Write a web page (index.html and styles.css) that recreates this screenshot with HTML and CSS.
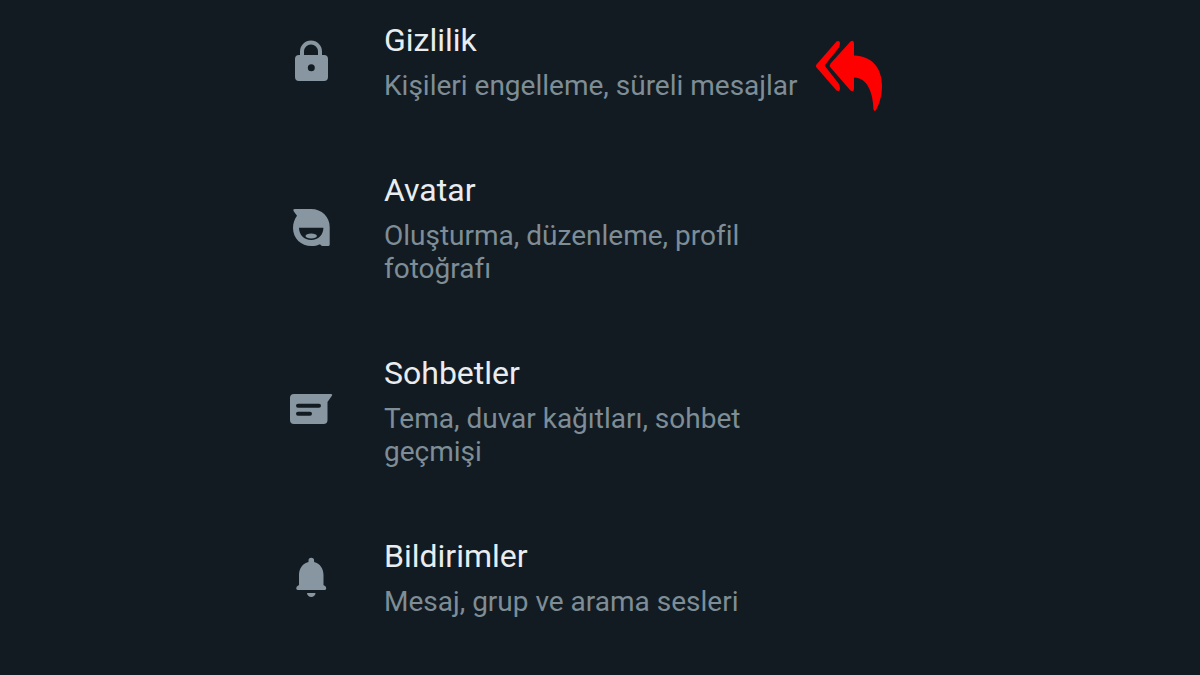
FILE: index.html
```
<!DOCTYPE html>
<html lang="tr">
<head>
<meta charset="UTF-8">
<meta name="viewport" content="width=device-width, initial-scale=1">
<title>Ayarlar</title>
<link rel="stylesheet" href="styles.css">
</head>
<body>
<nav class="settings">
    <a class="row" href="#gizlilik">
        <svg class="icon" viewBox="0 0 60 60" aria-hidden="true">
            <path d="M22 25v-4.500a9 9 0 0 1 18 0V25" fill="none" stroke="currentColor" stroke-width="4"/>
            <path fill-rule="evenodd" d="M19 24h25a4 4 0 0 1 4 4v18a4 4 0 0 1-4 4H19a4 4 0 0 1-4-4V28a4 4 0 0 1 4-4zm12.300 9.300a3.500 3.500 0 1 0 0 7a3.500 3.500 0 0 0 0-7z"/>
        </svg>
        <span class="text">
            <span class="title">Gizlilik</span>
            <span class="desc">Kişileri engelleme, süreli mesajlar</span>
        </span>
        <svg class="arrow" viewBox="0 0 90 90" aria-hidden="true">
            <path d="M30.500 11.500q3.500-1.500 3.500 2.500L33 17.500L18.500 35.500L33 54l1 4q0 4-3.500 2.500L10.500 37.500q-1.500-1.500 0-3z"/>
            <path d="M44.500 11.500q3.500-2 3.500 2V25.500C66 26 76 38 76 56c0 9-2.500 18-6 24q-1.500 2-2.500-.5C67 62 61 47.500 48 47.500V58q0 4.500-3.500 2.500L24.500 37.500q-1.500-2 0-4z"/>
        </svg>
    </a>
    <a class="row" href="#avatar">
        <svg class="icon" viewBox="0 0 60 60" aria-hidden="true">
            <path fill-rule="evenodd" d="M14.500 12H31c11 0 18.700 8 18.700 18v17.500q0 1.500-1.500 1.500H42.500q-1.500 0-2.500-1.800C37.500 48.500 34.500 49 31.500 49C21 49 13 41.500 13 31c0-5 1.700-9 4-12.200L13.500 14q-.8-2 1-2zM19 30.800c0 7 5 12.200 12.200 12.200s12.200-5.200 12.200-12.200z"/>
            <ellipse cx="31.200" cy="39" rx="5.700" ry="2.400"/>
        </svg>
        <span class="text">
            <span class="title">Avatar</span>
            <span class="desc">Oluşturma, düzenleme, profil fotoğrafı</span>
        </span>
    </a>
    <a class="row" href="#sohbetler">
        <svg class="icon" viewBox="0 0 60 60" aria-hidden="true">
            <path d="M14 14H51q2 0 .7 2L47.500 22V40a4 4 0 0 1-4 4H14a4 4 0 0 1-4-4V18a4 4 0 0 1 4-4z"/>
            <path class="line" d="M18 25.700H39M18 33.800H30"/>
        </svg>
        <span class="text">
            <span class="title">Sohbetler</span>
            <span class="desc">Tema, duvar kağıtları, sohbet geçmişi</span>
        </span>
    </a>
    <a class="row" href="#bildirimler">
        <svg class="icon" viewBox="0 0 60 60" aria-hidden="true">
            <path d="M28.500 15v-1.500a2.800 2.800 0 0 1 5.600 0V15C40 16.500 43.500 21.500 43.500 28v10l2.200 1.600q1.500 3.400-1.200 3.400H18q-2.700 0-1.200-3.400L19 38V28c0-6.500 3.500-11.500 9.500-13z"/>
            <path d="M27 46h8.500a4.200 4 0 0 1-8.500 0z"/>
        </svg>
        <span class="text">
            <span class="title">Bildirimler</span>
            <span class="desc">Mesaj, grup ve arama sesleri</span>
        </span>
    </a>
</nav>
</body>
</html>
```

FILE: styles.css
```
:root{--bg:#121b22;--title:#e9edf0;--muted:#7e8d96;--icon:#8796a1;--mark:#ff0000}
*{margin:0;padding:0;box-sizing:border-box}
body{background:var(--bg);font-family:Roboto,sans-serif}

/* Settings list */
.settings{display:flex;flex-direction:column;gap:69px;max-width:640px;margin:0 auto;padding:21px 0 32px}
.row{position:relative;display:flex;align-items:center;gap:44px;color:inherit;text-decoration:none}
.icon{flex:none;width:60px;height:60px;margin-bottom:2px;fill:currentColor;color:var(--icon)}
.icon .line{fill:none;stroke:var(--bg);stroke-width:4;stroke-linecap:round}
.text{display:flex;flex-direction:column;gap:10px;max-width:420px}
.title{font-size:32px;line-height:38px;color:var(--title)}
.desc{font-size:28px;line-height:33px;color:var(--muted)}

/* Pointer over the first row */
.arrow{position:absolute;top:9px;right:24px;width:90px;height:90px;fill:var(--mark)}
```
